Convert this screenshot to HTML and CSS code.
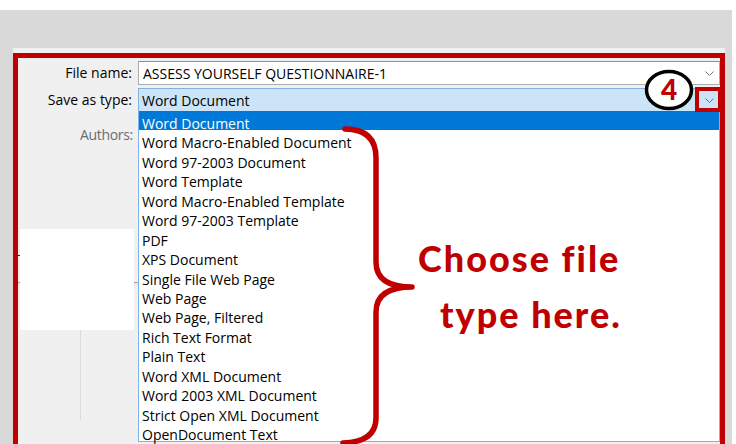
FILE: index.html
```html
<!DOCTYPE html>
<html lang="en">
<head>
<meta charset="utf-8">
<title>Save As</title>
<link rel="stylesheet" href="styles.css">
</head>
<body>
<div class="desk">
  <div class="dialog">
    <div class="form">
      <label class="lbl">File name:</label>
      <div class="combo">
        <span class="val">ASSESS YOURSELF QUESTIONNAIRE-1</span>
        <svg class="chev" width="9" height="5" viewBox="0 0 9 5"><path d="M0.5 0.5L4.5 4.5L8.5 0.5"/></svg>
      </div>
      <label class="lbl">Save as type:</label>
      <div class="combo combo-open">
        <span class="val">Word Document</span>
        <svg class="chev" width="9" height="5" viewBox="0 0 9 5"><path d="M0.5 0.5L4.5 4.5L8.5 0.5"/></svg>
        <ul class="list">
          <li class="sel">Word Document</li>
          <li>Word Macro-Enabled Document</li>
          <li>Word 97-2003 Document</li>
          <li>Word Template</li>
          <li>Word Macro-Enabled Template</li>
          <li>Word 97-2003 Template</li>
          <li>PDF</li>
          <li>XPS Document</li>
          <li>Single File Web Page</li>
          <li>Web Page</li>
          <li>Web Page, Filtered</li>
          <li>Rich Text Format</li>
          <li>Plain Text</li>
          <li>Word XML Document</li>
          <li>Word 2003 XML Document</li>
          <li>Strict Open XML Document</li>
          <li>OpenDocument Text</li>
        </ul>
      </div>
      <label class="lbl lbl-muted">Authors:</label>
      <div class="meta"></div>
    </div>
    <div class="lower">
      <div class="pane"></div>
      <div class="vline"></div>
    </div>
  </div>
</div>

<svg class="marks" width="736" height="444" viewBox="0 0 736 444">
  <rect class="frame" x="15.5" y="55.5" width="707" height="420"/>
  <rect class="frame frame-sm" x="697" y="89" width="23" height="21"/>
  <ellipse class="badge" cx="669" cy="90" rx="22.5" ry="18.5"/>
  <text class="badge-num" x="669" y="100">4</text>
  <path class="brace" d="M345 129 Q376 129 376 158 L376 262 Q376 287 412 287 Q376 287 376 312 L376 418 Q376 442 343 443"/>
</svg>

<div class="callout">
  <span class="callout-line">Choose file</span>
  <span class="callout-line callout-indent">type here.</span>
</div>
</body>
</html>
```

FILE: styles.css
```css
* { box-sizing: border-box; }

html, body {
  margin: 0;
  padding: 0;
  background: #ffffff;
}

body {
  width: 736px;
  height: 444px;
  overflow: hidden;
  position: relative;
  font-family: "Open Sans", "Noto Sans", sans-serif;
  font-size: 14px;
  color: #000;
}

/* grey backdrop behind the dialog */
.desk {
  margin-top: 10px;
  width: 732px;
  height: 434px;
  background: #d9d9d9;
  padding: 38px 7px 0 13px;
}

.dialog {
  height: 396px;
  background: #f0f0f0;
}

/* label / field rows */
.form {
  display: grid;
  grid-template-columns: 119px 582px;
  column-gap: 6px;
  row-gap: 3px;
  padding-top: 13px;
}

.lbl {
  text-align: right;
  line-height: 24px;
  white-space: nowrap;
}

.lbl-muted {
  color: #6d6d6d;
  margin-top: 8px;
  margin-right: -1px;
  letter-spacing: -0.3px;
}

.combo {
  position: relative;
  height: 24px;
  display: flex;
  align-items: center;
  justify-content: space-between;
  padding: 0 5px 0 4px;
  background: #fff;
  border: 1px solid #adadad;
  border-top-color: #8f8f8f;
}

.combo-open {
  background: #cce4f7;
  border-color: #7fb3e4;
  padding-left: 3px;
}

.val {
  white-space: nowrap;
}

.chev path {
  fill: none;
  stroke: #6e6e6e;
  stroke-width: 1;
}

/* opened drop-down list */
.list {
  position: absolute;
  top: 100%;
  left: -1px;
  right: -1px;
  margin: 0;
  padding: 0;
  list-style: none;
  background: #fff;
  border: 1px solid #7eb4ea;
  border-top: 0;
  z-index: 2;
}

.list li {
  height: 19.44px;
  padding-top: 6px;
  line-height: 13.44px;
  padding-left: 3px;
  white-space: nowrap;
}

.list li.sel {
  background: #0078d7;
  color: #fff;
}

/* navigation pane remains below the form */
.lower {
  padding-top: 82px;
  background:
    linear-gradient(#2b2b2b, #2b2b2b) 5px 108px / 3px 1px no-repeat,
    linear-gradient(#a3a3a3, #a3a3a3) 0 135px / 125px 1px no-repeat,
    linear-gradient(#e2e2e2, #f0f0f0) 0 136px / 125px 4px no-repeat;
}

.pane {
  margin-left: 7px;
  width: 114px;
  height: 101px;
  background: #fff;
}

.vline {
  margin-left: 67px;
  width: 1px;
  height: 90px;
  background: #dcdcdc;
}

/* annotation layer */
.marks {
  position: absolute;
  top: 0;
  left: 0;
  z-index: 5;
  pointer-events: none;
}

.frame {
  fill: none;
  stroke: #c00000;
  stroke-width: 5;
}

.frame-sm {
  stroke-width: 4;
}

.badge {
  fill: #fff;
  stroke: #000;
  stroke-width: 3.5;
}

.badge-num {
  font-family: "Lato", "Noto Sans", sans-serif;
  font-weight: 900;
  font-size: 28px;
  fill: #c00000;
  text-anchor: middle;
}

.brace {
  fill: none;
  stroke: #c00000;
  stroke-width: 5.5;
  stroke-linecap: round;
  stroke-linejoin: round;
}

.callout {
  position: absolute;
  top: 230px;
  left: 418px;
  z-index: 6;
  font-family: "Lato", "Noto Sans", sans-serif;
  font-weight: 900;
  font-size: 36px;
  line-height: 56px;
  letter-spacing: 2px;
  color: #c00000;
  white-space: nowrap;
}

.callout-line {
  display: block;
}

.callout-indent {
  margin-left: 22px;
}
```
